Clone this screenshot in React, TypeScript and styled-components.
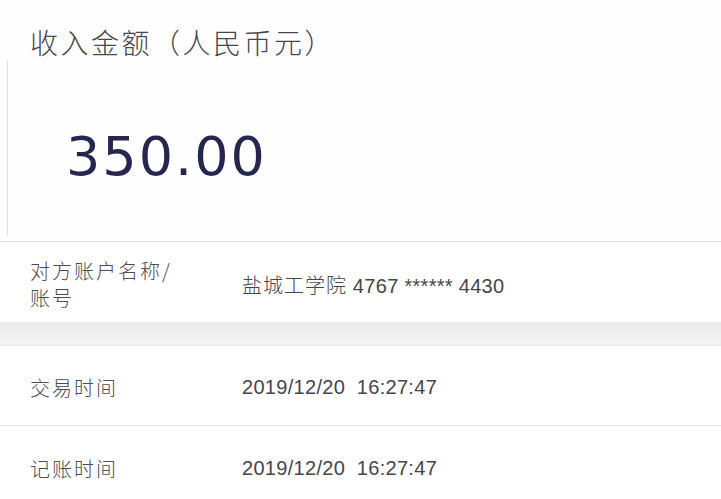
import React from "react";
import styled, { createGlobalStyle } from "styled-components";

const GlobalStyle = createGlobalStyle`
  html, body {
    margin: 0;
    padding: 0;
    background: #ffffff;
  }
  body {
    font-family: "Noto Sans CJK SC", "Noto Sans", sans-serif;
  }
`;

const Page = styled.div`
  width: 721px;
  height: 499px;
  overflow: hidden;
  background: #fff;
`;

const Header = styled.section`
  height: 242px;
  padding-top: 24px;
  box-sizing: border-box;
  border-bottom: 1px solid #e3e3e6;
  background: #fefefe;
`;

const Title = styled.h1`
  margin: 0 0 0 30px;
  font-size: 28px;
  line-height: 36px;
  font-weight: 300;
  letter-spacing: 2.5px;
  color: #47474d;
`;

const AmountBox = styled.div`
  margin: 0 0 0 7px;
  height: 176px;
  border-left: 1px solid #dcdcde;
  display: flex;
  align-items: center;
  padding-left: 58px;
  padding-top: 16px;
  box-sizing: border-box;
`;

const Amount = styled.span`
  font-family: "DejaVu Sans", "Noto Sans", sans-serif;
  font-size: 54px;
  font-weight: 400;
  letter-spacing: 2px;
  color: #262650;
`;

const Row = styled.div<{ $h: number; $last?: boolean }>`
  height: ${(p) => p.$h}px;
  display: flex;
  align-items: center;
  padding-left: 30px;
  box-sizing: border-box;
  border-bottom: ${(p) => (p.$last ? "none" : "1px solid #e6e6e8")};
  background: #fff;
`;

const Label = styled.div`
  width: 212px;
  font-size: 20px;
  line-height: 27px;
  letter-spacing: 2px;
  color: #4c4c52;
  font-weight: 300;
  padding-top: 4px;
`;

const Value = styled.div`
  font-family: "Liberation Sans", "Noto Sans CJK SC", sans-serif;
  font-size: 20px;
  letter-spacing: 0.3px;
  color: #45454b;
  white-space: pre;
  padding-top: 4px;
`;

const ValueCjk = styled.span`
  font-family: "Noto Sans CJK SC", sans-serif;
  font-weight: 300;
  letter-spacing: 1px;
`;

const Band = styled.div`
  height: 23px;
  background: linear-gradient(#ececee, #f3f3f5);
  border-bottom: 1px solid #ebebed;
`;

export default function App() {
  return (
    <Page>
      <GlobalStyle />
      <Header>
        <Title>收入金额（人民币元）</Title>
        <AmountBox>
          <Amount>350.00</Amount>
        </AmountBox>
      </Header>
      <Row $h={80} $last>
        <Label>
          对方账户名称/
          <br />
          账号
        </Label>
        <Value>
          <ValueCjk>盐城工学院</ValueCjk> 4767 ****** 4430
        </Value>
      </Row>
      <Band />
      <Row $h={80}>
        <Label>交易时间</Label>
        <Value>2019/12/20  16:27:47</Value>
      </Row>
      <Row $h={80} $last>
        <Label>记账时间</Label>
        <Value>2019/12/20  16:27:47</Value>
      </Row>
    </Page>
  );
}
